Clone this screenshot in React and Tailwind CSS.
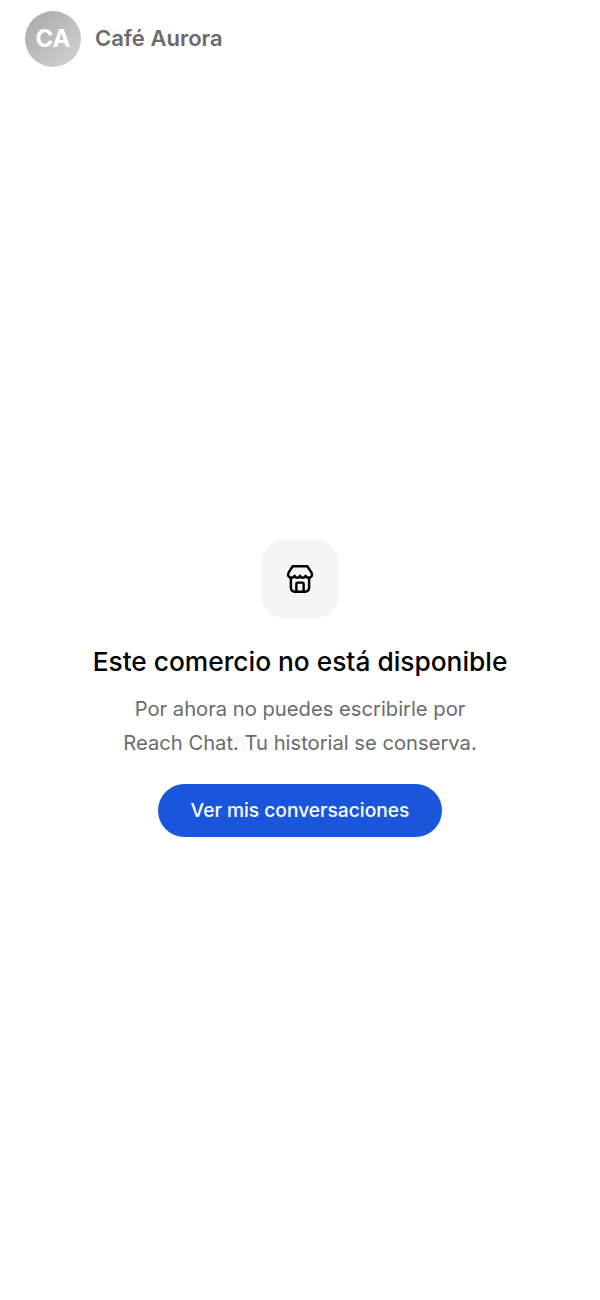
import React from 'react';

function StoreIcon() {
  return (
    <svg width="34" height="34" viewBox="0 0 28 28" fill="none" stroke="#000" strokeWidth="2" strokeLinejoin="round" strokeLinecap="round">
      <path d="M8 3.5h12l3 4.5c.6 1 .9 1.7.9 2.4 0 1.5-1.3 2.6-2.7 2.6-1.2 0-2.1-.6-2.6-1.6-.5 1-1.5 1.6-2.6 1.6s-1.4-.6-1.9-1.6c-.5 1-.9 1.6-2 1.6s-2.1-.6-2.6-1.6c-.5 1-1.4 1.6-2.6 1.6-1.4 0-2.7-1.1-2.7-2.6 0-.7.3-1.4.9-2.4z" />
      <path d="M6.5 13v8.5a3 3 0 0 0 3 3h9a3 3 0 0 0 3-3V13" />
      <path d="M11 24v-6a1 1 0 0 1 1-1h4a1 1 0 0 1 1 1v6" />
    </svg>
  );
}

export default function App() {
  return (
    <div className="min-h-[1300px] bg-white flex flex-col font-['Inter',sans-serif]">
      <header className="flex items-center gap-[14px] px-[25px] pt-[11px]">
        <div className="w-14 h-14 rounded-full bg-gradient-to-br from-[#a8a8a8] to-[#d4d4d4] flex items-center justify-center text-white font-bold text-[24px]">
          CA
        </div>
        <span className="text-[22px] leading-[54px] mb-[2px] font-semibold text-[#6b6b6b]">Café Aurora</span>
      </header>

      <main className="flex flex-col items-center pt-[473px]">
        <div className="w-[78px] h-[78px] rounded-[24px] bg-[#f5f5f5] flex items-center justify-center">
          <StoreIcon />
        </div>
        <h1 className="mt-[24px] text-[26.3px] leading-[40px] font-medium text-black">Este comercio no está disponible</h1>
        <p className="mt-[10px] text-center text-[20.2px] leading-[34px] text-[#6b6b6b]">
          Por ahora no puedes escribirle por
          <br />
          Reach Chat. Tu historial se conserva.
        </p>
        <button className="mt-[24px] h-[53px] w-[284px] rounded-full bg-[#1a56db] text-white text-[19.2px] font-medium">
          Ver mis conversaciones
        </button>
      </main>
    </div>
  );
}
